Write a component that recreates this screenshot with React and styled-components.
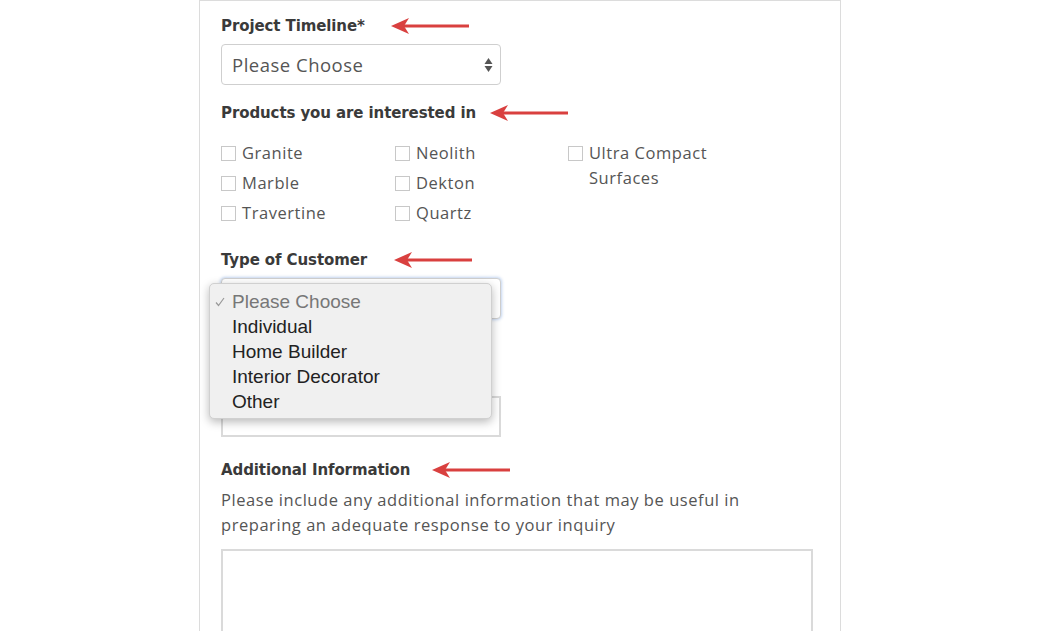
import styled, { createGlobalStyle } from "styled-components";

const GlobalStyle = createGlobalStyle`
  html, body {
    margin: 0;
    padding: 0;
    background: #fff;
  }
  body {
    font-family: "Open Sans", "Liberation Sans", sans-serif;
    color: #555;
  }
`;

const Arrow = () => (
  <svg width="78" height="18" viewBox="0 0 78 18">
    <line x1="12" y1="9" x2="78" y2="9" stroke="#d9403f" strokeWidth="3" />
    <polygon points="0,9 18,1 13,9 18,17" fill="#d9403f" />
  </svg>
);

const Spinner = () => (
  <svg width="9" height="16" viewBox="0 0 9 16">
    <polygon points="4.5,1 8.5,7 0.5,7" fill="#555" />
    <polygon points="4.5,15 8.5,9 0.5,9" fill="#555" />
  </svg>
);

const Check = () => (
  <svg width="10" height="10" viewBox="0 0 10 10">
    <polyline points="1,5.5 3.5,8.5 9,1" fill="none" stroke="#999" strokeWidth="1.2" />
  </svg>
);

const products = [
  ["Granite", "Marble", "Travertine"],
  ["Neolith", "Dekton", "Quartz"],
  ["Ultra Compact Surfaces"],
];

const customerTypes = ["Individual", "Home Builder", "Interior Decorator", "Other"];

const App = () => {
  return (
    <>
      <GlobalStyle />
      <Panel>
        <LabelRow $gap={26}>
          <Label>Project Timeline*</Label>
          <Arrow />
        </LabelRow>
        <Select>
          <span>Please Choose</span>
          <Spinner />
        </Select>

        <LabelRow $top={18} $gap={14}>
          <Label>Products you are interested in</Label>
          <Arrow />
        </LabelRow>
        <CheckGrid>
          {products.map((col, i) => (
            <CheckCol key={i}>
              {col.map((p) => (
                <CheckItem key={p}>
                  <Box />
                  <span>{p}</span>
                </CheckItem>
              ))}
            </CheckCol>
          ))}
        </CheckGrid>

        <LabelRow $top={21} $gap={27}>
          <Label>Type of Customer</Label>
          <Arrow />
        </LabelRow>
        <SelectWrap>
          <Select $focused />
          <Menu>
            <MenuItem $selected>
              <CheckMark>
                <Check />
              </CheckMark>
              Please Choose
            </MenuItem>
            {customerTypes.map((t) => (
              <MenuItem key={t}>{t}</MenuItem>
            ))}
          </Menu>
        </SelectWrap>
        <TextInput />

        <LabelRow $top={23} $gap={22}>
          <Label>Additional Information</Label>
          <Arrow />
        </LabelRow>
        <Help>
          Please include any additional information that may be useful in
          preparing an adequate response to your inquiry
        </Help>
        <TextArea />
      </Panel>
    </>
  );
};

const Panel = styled.div`
  width: 642px;
  box-sizing: border-box;
  margin: 0 auto;
  height: 631px;
  overflow: hidden;
  border: 1px solid #dcdcdc;
  border-bottom: none;
  padding: 15px 27px 0 21px;
`;

const LabelRow = styled.div`
  display: flex;
  align-items: center;
  gap: ${({ $gap }) => $gap}px;
  height: 20px;
  margin-top: ${({ $top }) => $top || 0}px;
`;

const Label = styled.div`
  font-family: "DejaVu Sans", "Open Sans", sans-serif;
  font-weight: bold;
  font-size: 15px;
  color: #3a3a3a;
  letter-spacing: -0.1px;
`;

const SelectWrap = styled.div`
  position: relative;
`;

const Select = styled.div`
  margin-top: 8px;
  width: 280px;
  height: 41px;
  box-sizing: border-box;
  display: flex;
  align-items: center;
  justify-content: space-between;
  padding: 0 7px 0 10px;
  border: 1px solid #cfcfcf;
  border-radius: 4px;
  background: #fff;
  font-size: 18.5px;
  letter-spacing: 0.5px;
  color: #555;
  box-shadow: ${({ $focused }) =>
    $focused ? "0 0 3px 1px rgba(120, 160, 220, 0.45)" : "none"};
`;

const Menu = styled.div`
  position: absolute;
  top: 5px;
  left: -12px;
  width: 283px;
  box-sizing: border-box;
  padding: 5px 0 4px;
  background: #f0f0f0;
  border: 1px solid #d0d0d0;
  border-radius: 5px;
  box-shadow: 0 3px 10px rgba(0, 0, 0, 0.28);
  font-family: "Liberation Sans", Arial, sans-serif;
  font-size: 19px;
`;

const MenuItem = styled.div`
  position: relative;
  height: 25px;
  line-height: 25px;
  padding-left: 22px;
  color: ${({ $selected }) => ($selected ? "#777" : "#222")};
`;

const CheckMark = styled.span`
  position: absolute;
  left: 5px;
  top: 8px;
  display: flex;
`;

const CheckGrid = styled.div`
  display: grid;
  grid-template-columns: 174px 173px 150px;
  margin-top: 16px;
`;

const CheckCol = styled.div`
  display: flex;
  flex-direction: column;
`;

const CheckItem = styled.label`
  display: flex;
  align-items: flex-start;
  gap: 6px;
  font-size: 16.5px;
  letter-spacing: 0.55px;
  line-height: 25px;
  min-height: 30px;
  color: #555;
  span {
    padding-top: 1px;
  }
`;

const Box = styled.span`
  flex: none;
  width: 15px;
  height: 15px;
  box-sizing: border-box;
  border: 1px solid #c8c8c8;
  background: #fff;
  margin-top: 7px;
`;

const TextInput = styled.div`
  margin-top: 77px;
  width: 280px;
  height: 41px;
  box-sizing: border-box;
  border: 2px solid #dadada;
`;

const Help = styled.p`
  margin: 7px 0 0;
  max-width: 560px;
  font-size: 16.5px;
  letter-spacing: 0.55px;
  line-height: 25px;
  color: #555;
`;

const TextArea = styled.div`
  margin-top: 12px;
  width: 592px;
  height: 120px;
  box-sizing: border-box;
  border: 2px solid #dadada;
`;

export default App;
